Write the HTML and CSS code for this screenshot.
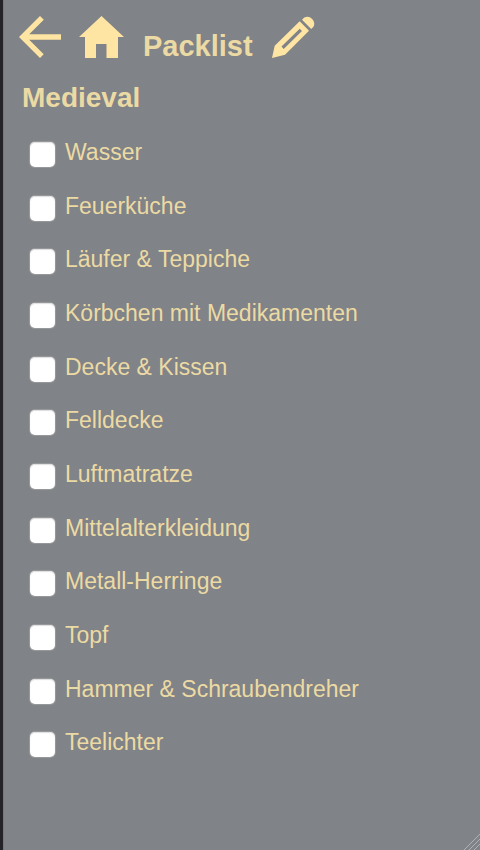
FILE: index.html
```html
<!DOCTYPE html>
<html lang="de">
<head>
<meta charset="utf-8">
<meta name="viewport" content="width=device-width, initial-scale=1">
<title>Packlist</title>
<link rel="stylesheet" href="styles.css">
</head>
<body>
<header class="toolbar">
  <a class="icon-link" href="#back" aria-label="Zurück">
    <svg width="42" height="42" viewBox="0 0 42 42"><path d="M42 18.300H10.200L24.800 3.700L21 0L0 21L21 42L24.700 38.300L10.200 23.700H42Z"/></svg>
  </a>
  <a class="icon-link" href="#home" aria-label="Start">
    <svg width="46" height="42" viewBox="0 0 46 42"><path d="M22.500 0L45 21H39V42H27.500V28H17V42H6V21H0Z"/></svg>
  </a>
  <h1 class="title">Packlist</h1>
  <a class="icon-link" href="#edit" aria-label="Bearbeiten">
    <svg width="46" height="42" viewBox="0 0 46 42"><path fill-rule="evenodd" d="M1 42L3.700 29.700L28.700 5.300L38 14.700L14 38.700ZM10.500 30.500L12.700 33L31 15L28.700 12.700Z"/><path d="M31 3.700L33.300 1.400A7 7 0 0 1 42.500 10.800L40.200 13Z"/></svg>
  </a>
</header>
<main class="content">
  <h2 class="list-name">Medieval</h2>
  <ul class="items">
    <li><label class="item"><input class="tick" type="checkbox">Wasser</label></li>
    <li><label class="item"><input class="tick" type="checkbox">Feuerküche</label></li>
    <li><label class="item"><input class="tick" type="checkbox">Läufer &amp; Teppiche</label></li>
    <li><label class="item"><input class="tick" type="checkbox">Körbchen mit Medikamenten</label></li>
    <li><label class="item"><input class="tick" type="checkbox">Decke &amp; Kissen</label></li>
    <li><label class="item"><input class="tick" type="checkbox">Felldecke</label></li>
    <li><label class="item"><input class="tick" type="checkbox">Luftmatratze</label></li>
    <li><label class="item"><input class="tick" type="checkbox">Mittelalterkleidung</label></li>
    <li><label class="item"><input class="tick" type="checkbox">Metall-Herringe</label></li>
    <li><label class="item"><input class="tick" type="checkbox">Topf</label></li>
    <li><label class="item"><input class="tick" type="checkbox">Hammer &amp; Schraubendreher</label></li>
    <li><label class="item"><input class="tick" type="checkbox">Teelichter</label></li>
  </ul>
</main>
<svg class="grip" width="16" height="16" viewBox="0 0 16 16" aria-hidden="true"><path d="M0 16L16 0M5 16L16 5M10 16L16 10"/></svg>
</body>
</html>
```
FILE: styles.css
```css
* {
  box-sizing: border-box;
}

body {
  margin: 0;
  min-height: 100vh;
  padding: 16px 16px 0;
  border-left: 3px solid #242328;
  background: #808387;
  box-shadow: inset 1px 0 #75787e;
  color: #ecdaa4;
  font-family: "Liberation Sans", Arial, sans-serif;
}

h1,
h2,
ul {
  margin: 0;
  padding: 0;
}

.toolbar {
  display: flex;
  gap: 18px;
  height: 42px;
}

.icon-link {
  display: block;
  height: 42px;
  fill: #ffe5a3;
}

.icon-link svg {
  display: block;
}

.title {
  padding-top: 12px;
  font-size: 29px;
  line-height: 36px;
}

.list-name {
  padding: 22px 3px 0;
  font-size: 28px;
  line-height: 36px;
}

.items {
  display: grid;
  grid-auto-rows: 1fr;
  min-height: 644px;
  padding-left: 11px;
  margin-top: 10px;
  list-style: none;
}

.item {
  display: flex;
  gap: 10px;
  font-size: 23px;
  line-height: 53px;
}

.tick {
  appearance: none;
  flex: none;
  width: 25px;
  height: 25px;
  margin: 16px 0 0;
  border-radius: 5px;
  background: #fff;
  box-shadow: 0 0 1px 1px #989a9d, inset 0 1px 1px #ddd;
}

.tick:checked {
  background: #ffe5a3;
}

.grip {
  position: absolute;
  right: 0;
  bottom: 0;
  fill: none;
  stroke: #b0b2b4;
}
```
